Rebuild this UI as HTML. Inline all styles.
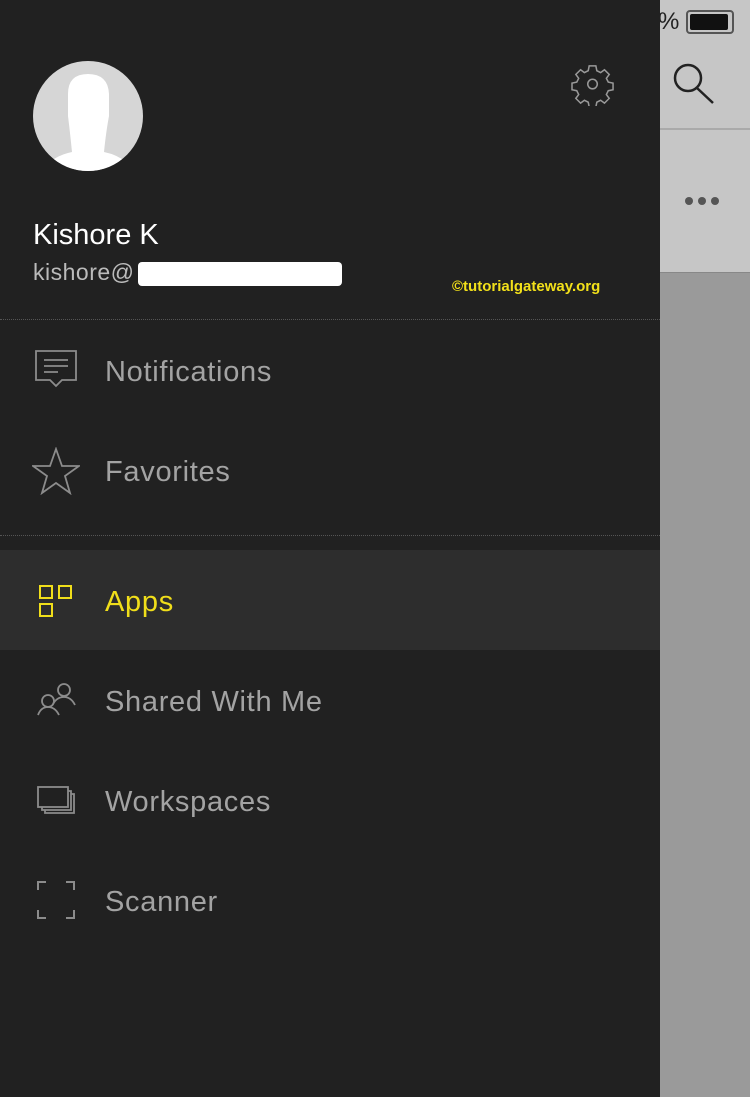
<!DOCTYPE html><html><head><style>
body{margin:0;width:750px;height:1097px;position:relative;overflow:hidden;font-family:"Liberation Sans",sans-serif;background:#9a9a9a}
.r{position:absolute}
.drawer{left:0;top:0;width:660px;height:1097px;background:#212121}
.item{position:absolute;left:105px;font-size:29px;letter-spacing:0.7px;color:#a3a3a3;line-height:34px}
svg{position:absolute}
</style></head><body>
<div class="r" style="left:660px;top:0;width:90px;height:272px;background:#c6c6c6"></div>
<div class="r" style="left:660px;top:128px;width:90px;height:2px;background:#aaa"></div>
<div class="r" style="left:660px;top:272px;width:90px;height:1px;background:#888"></div>
<div class="r" style="left:658px;top:8px;font-size:24px;color:#222">%</div>
<div class="r" style="left:686px;top:10px;width:44px;height:20px;border:2px solid #555;border-radius:4px"></div>
<div class="r" style="left:690px;top:14px;width:38px;height:16px;background:#111;border-radius:2px"></div>
<svg style="left:668px;top:60px" width="50" height="50"><circle cx="20" cy="18" r="13" fill="none" stroke="#222" stroke-width="2.5"/><line x1="29" y1="28" x2="45" y2="43" stroke="#222" stroke-width="2.5"/></svg>
<svg style="left:680px;top:194px" width="46" height="14"><circle cx="9" cy="7" r="4" fill="#555"/><circle cx="22" cy="7" r="4" fill="#555"/><circle cx="35" cy="7" r="4" fill="#555"/></svg>
<div class="r drawer"></div>
<svg style="left:32px;top:60px" width="112" height="112"><circle cx="56" cy="56" r="55" fill="#d6d6d6"/><clipPath id="c"><circle cx="56" cy="56" r="55"/></clipPath><g clip-path="url(#c)" fill="#fff"><path d="M36 34 Q36 14 56 14 Q76 14 77 34 L77 56 Q74 72 72 92 Q92 96 104 112 L8 112 Q20 96 40 92 Q38 72 36 56Z"/></g></svg>
<svg style="left:571px;top:64px" width="44" height="42" viewBox="0 0 46 44"><path d="M19 2h7l1 5 4 2 4-3 5 5-3 4 2 4 5 1v7l-5 1-2 4 3 4-5 5-4-3-4 2-1 5h-7l-1-5-4-2-4 3-5-5 3-4-2-4-5-1v-7l5-1 2-4-3-4 5-5 4 3 4-2z" fill="none" stroke="#999" stroke-width="1.6"/><circle cx="22.5" cy="21" r="5" fill="none" stroke="#999" stroke-width="1.6"/></svg>
<div class="r" style="left:33px;top:219px;font-size:29px;color:#fff">Kishore K</div>
<div class="r" style="left:33px;top:259px;font-size:23px;letter-spacing:0.5px;color:#bbb">kishore@</div>
<div class="r" style="left:138px;top:262px;width:204px;height:24px;background:#fff;border-radius:4px"></div>
<div class="r" style="left:452px;top:278px;font-size:15px;font-weight:bold;color:#f2e01a">©tutorialgateway.org</div>
<div class="r" style="left:0;top:319px;width:660px;border-top:1px dotted #555"></div>
<div class="r" style="left:0;top:535px;width:660px;border-top:1px dotted #555"></div>
<div class="r" style="left:0;top:550px;width:660px;height:100px;background:#2d2d2d"></div>
<svg style="left:34px;top:349px" width="44" height="44"><path d="M2 2h40v29H28l-6 6-6-6H2z" fill="none" stroke="#8c8c8c" stroke-width="1.8"/><path d="M10 11h24M10 17h24M10 23h14" stroke="#8c8c8c" stroke-width="1.8"/></svg>
<div class="item" style="top:355px">Notifications</div>
<svg style="left:32px;top:447px" width="48" height="48"><path d="M24 2l6 17h17l-14 10 5 17-14-10-14 10 5-17-14-10h17z" fill="none" stroke="#8c8c8c" stroke-width="1.8"/></svg>
<div class="item" style="top:455px">Favorites</div>
<svg style="left:38px;top:584px" width="36" height="36"><g fill="none" stroke="#f0de1a" stroke-width="2"><rect x="2" y="2" width="12" height="12"/><rect x="21" y="2" width="12" height="12"/><rect x="2" y="20" width="12" height="12"/></g></svg>
<div class="item" style="top:585px;color:#f0de1a">Apps</div>
<svg style="left:36px;top:680px" width="42" height="42"><g fill="none" stroke="#8c8c8c" stroke-width="1.8"><circle cx="28" cy="10" r="6"/><path d="M17 24q4-7 11-7t11 8"/><circle cx="12" cy="21" r="6"/><path d="M2 35q3-8 10-8t11 8"/></g></svg>
<div class="item" style="top:685px">Shared With Me</div>
<svg style="left:36px;top:785px" width="42" height="34"><g fill="none" stroke="#8c8c8c" stroke-width="1.8"><rect x="2" y="2" width="30" height="20"/><path d="M32 6h3v19H6v-3M35 9h3v19H9v-3"/></g></svg>
<div class="item" style="top:785px">Workspaces</div>
<svg style="left:36px;top:880px" width="40" height="40"><g fill="none" stroke="#8c8c8c" stroke-width="2"><path d="M2 10V2h8M30 2h8v8M38 30v8h-8M10 38H2v-8"/></g></svg>
<div class="item" style="top:885px">Scanner</div>
</body></html>
